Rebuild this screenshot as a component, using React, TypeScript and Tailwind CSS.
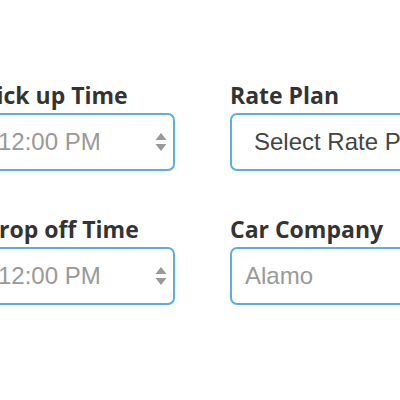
import { type ReactNode } from "react"

function Field({ label, width, children }: { label: string; width: string; children: ReactNode }) {
  return (
    <div className={`flex flex-col shrink-0 ${width}`}>
      <label className="block h-[28px] leading-[28px] text-[23px] font-bold text-[#333] whitespace-nowrap font-['Open_Sans',sans-serif] mb-[4px]">
        {label}
      </label>
      {children}
    </div>
  )
}

function Box({ children }: { children: ReactNode }) {
  return (
    <div className="h-[58px] w-full flex items-center border-2 border-[#5dade2] rounded-[7px] bg-white overflow-hidden font-['Liberation_Sans',Arial,sans-serif] text-[24px]">
      {children}
    </div>
  )
}

function Spinner() {
  return (
    <svg width="12" height="20" viewBox="0 0 12 20" className="shrink-0">
      <path d="M6 1 L11.5 8 L0.5 8 Z" fill="#999" />
      <path d="M6 19 L11.5 12 L0.5 12 Z" fill="#999" />
    </svg>
  )
}

function TimeInput({ value }: { value: string }) {
  return (
    <Box>
      <div className="flex-1 pl-[14px] text-[#999] whitespace-nowrap">{value}</div>
      <div className="pr-[6px] pl-1 flex items-center">
        <Spinner />
      </div>
    </Box>
  )
}

export default function App() {
  return (
    <div className="w-[400px] h-[400px] bg-white overflow-hidden">
      <div className="ml-[-18px] pt-[81px] flex flex-col gap-[44px]">
        <div className="flex gap-[55px]">
          <Field label="Pick up Time" width="w-[193px]">
            <TimeInput value="12:00 PM" />
          </Field>
          <Field label="Rate Plan" width="w-[193px]">
            <Box>
              <div className="pl-[22px] text-[#444] whitespace-nowrap">Select Rate Plan</div>
            </Box>
          </Field>
        </div>
        <div className="flex gap-[55px]">
          <Field label="Drop off Time" width="w-[193px]">
            <TimeInput value="12:00 PM" />
          </Field>
          <Field label="Car Company" width="w-[193px]">
            <Box>
              <div className="pl-[13px] text-[#999] whitespace-nowrap">Alamo</div>
            </Box>
          </Field>
        </div>
      </div>
    </div>
  )
}
